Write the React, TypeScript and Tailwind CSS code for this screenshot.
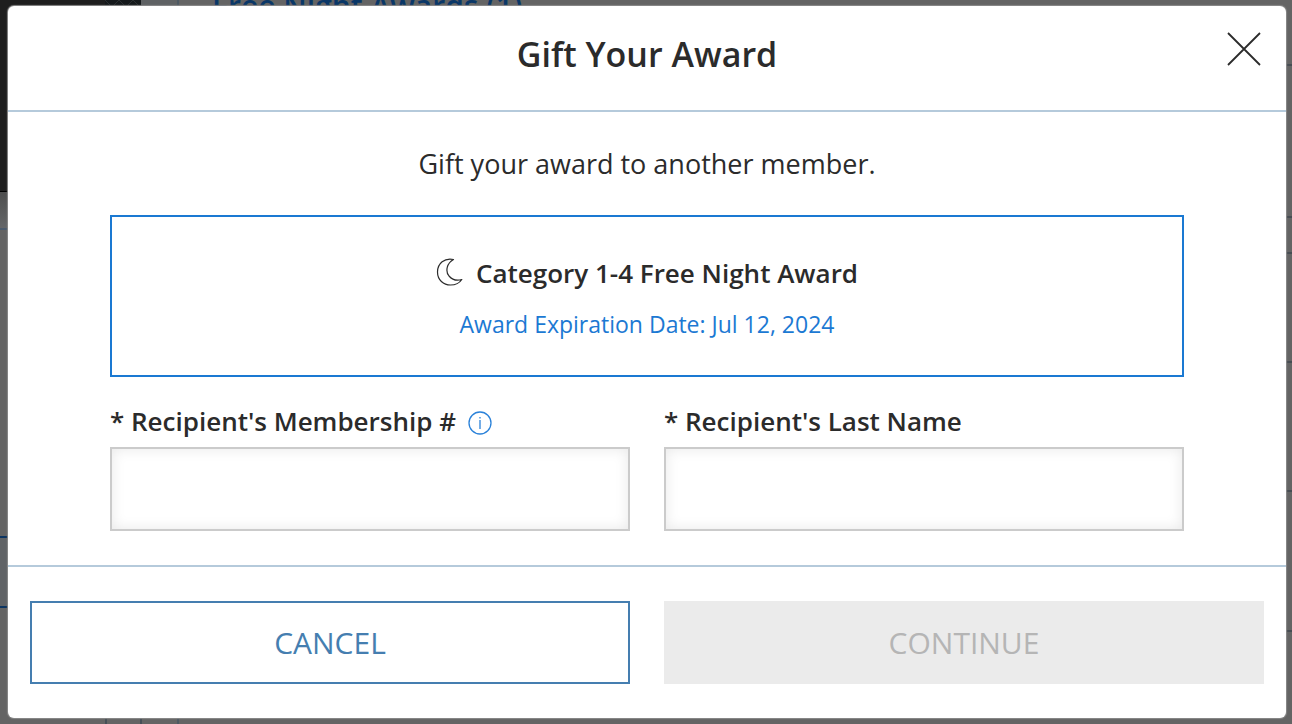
const MoonIcon = () => (
  <svg className="w-7 h-7 mb-0.5" viewBox="0 0 28 28" fill="none" stroke="#2b2b2b" strokeWidth="1.2" strokeLinejoin="round" aria-hidden="true">
    <path d="M17.5 1.5C8.5 -0.5 1.500 5.500 1.500 14C1.500 22 7.500 27 14.500 27C19.500 27 23.500 25 25.800 21.500C21 23 16 21.500 13 18C9 13 11 5 17.500 1.500Z" />
  </svg>
);

const InfoIcon = () => (
  <svg className="w-6 h-6" viewBox="0 0 24 24" fill="none" stroke="#2b82d9" strokeWidth="1.3" aria-hidden="true">
    <circle cx="12" cy="12" r="11" />
    <path d="M12 9V18M12 6V7.500" />
  </svg>
);

const CloseIcon = () => (
  <svg className="w-9 h-9" viewBox="0 0 36 36" fill="none" stroke="#2b2b2b" strokeWidth="1.8" aria-hidden="true">
    <path d="M2 2L34 34M34 2L2 34" />
  </svg>
);

// Dimmed account page that sits behind the dialog
const AccountPage = () => (
  <div className="min-h-screen flex bg-[#646464]" aria-hidden="true">
    <div className="w-[177px] shrink-0 flex flex-col">
      <div className="h-48 flex bg-[#1e1e1e] border-b border-black">
        <div className="flex-1" />
        <svg className="w-9 h-full">
          <defs>
            <pattern id="lattice" width="14" height="14" patternUnits="userSpaceOnUse">
              <rect width="14" height="14" fill="#15191b" />
              <path d="M0 0L14 14M14 0L0 14" stroke="#2b2f31" strokeWidth="1" />
            </pattern>
          </defs>
          <rect width="36" height="100%" fill="url(#lattice)" />
        </svg>
        <div className="w-9 bg-[#5f6264]" />
      </div>
      <div className="h-9 bg-linear-to-b from-[#4e4e4e] to-[#646668]" />
      <div className="h-[308px] border-t-2 border-[#4b5b6d]" />
      <div className="h-[72px] bg-[#606366] border-y-2 border-[#0c3562]" />
      <div className="flex-1 ml-[105px] grid grid-cols-2 border-l-2 border-[#454f57]">
        <div className="border-r-2 border-[#454f57]" />
      </div>
    </div>
    <div className="flex-1 border-l-2 border-[#4d5963] pl-[33px]">
      <p className="-mt-2.5 text-[30px] leading-8 font-semibold text-[#0a3767]">Free Night Awards (1)</p>
    </div>
    <div className="w-24 flex flex-col text-[#474d53]">
      <div className="h-[66px] border-b-2" />
      <div className="h-[152px] border-b-2" />
      <div className="h-9 border-b-2" />
      <div className="h-[109px] border-b-2" />
      <div className="h-[129px] border-b-2" />
      <div className="h-[140px] border-b-2" />
    </div>
  </div>
);

const App = () => {
  return (
    <div className="relative overflow-hidden font-['Open_Sans',sans-serif] text-[#2b2b2b]">
      <AccountPage />

      <div
        role="dialog"
        aria-modal="true"
        aria-labelledby="gift-title"
        className="absolute inset-x-0 top-0 ml-2 mr-1.5 my-1.5 rounded-md bg-white shadow-[0_0_1px_1px_#8a8a8a]"
      >
        {/* Header */}
        <header className="h-[106px] px-6 grid grid-cols-[36px_1fr_36px] border-b-2 border-[#b5cadb]">
          <h1 id="gift-title" className="col-start-2 pt-6 text-center text-[34px] leading-12 font-semibold">
            Gift Your Award
          </h1>
          <button type="button" aria-label="Close" className="mt-[25px] h-9 w-9">
            <CloseIcon />
          </button>
        </header>

        {/* Body */}
        <form id="gift-form" className="px-[102px] pt-8 pb-[34px]">
          <p className="text-center text-[27px] leading-10">Gift your award to another member.</p>

          <div className="mt-[31px] h-[162px] flex flex-col items-center border-2 border-[#1a79d2]">
            <div className="mt-9 flex items-center gap-3">
              <MoonIcon />
              <h2 className="text-[26px] leading-10 font-semibold">Category 1-4 Free Night Award</h2>
            </div>
            <p className="mt-[15px] text-[23px] leading-8 text-[#1c79d3]">Award Expiration Date: Jul 12, 2024</p>
          </div>

          <div className="mt-6 grid grid-cols-2 gap-[34px]">
            <div>
              <div className="flex items-center gap-3">
                <label htmlFor="membership" className="text-[26px] leading-10 font-semibold">
                  * Recipient's Membership #
                </label>
                <button type="button" aria-label="Membership number info" className="mt-1">
                  <InfoIcon />
                </button>
              </div>
              <input
                id="membership"
                type="text"
                className="mt-1.5 block w-full h-[84px] px-4 text-[26px] border-2 border-[#cbcbcb] shadow-[inset_0_0_14px_#e8e8e8] outline-none"
              />
            </div>
            <div>
              <label htmlFor="last-name" className="block text-[26px] leading-10 font-semibold">
                * Recipient's Last Name
              </label>
              <input
                id="last-name"
                type="text"
                className="mt-1.5 block w-full h-[84px] px-4 text-[26px] border-2 border-[#cbcbcb] shadow-[inset_0_0_14px_#e8e8e8] outline-none"
              />
            </div>
          </div>
        </form>

        {/* Footer */}
        <footer className="px-[22px] py-[34px] grid grid-cols-2 gap-[34px] border-t-2 border-[#b5cadb]">
          <button type="button" className="h-[83px] border-2 border-[#457eb0] text-[30px] text-[#457eb0]">
            CANCEL
          </button>
          <button type="submit" form="gift-form" disabled className="h-[83px] bg-[#ebebeb] text-[30px] text-[#b5b5b5]">
            CONTINUE
          </button>
        </footer>
      </div>
    </div>
  );
};

export default App;
